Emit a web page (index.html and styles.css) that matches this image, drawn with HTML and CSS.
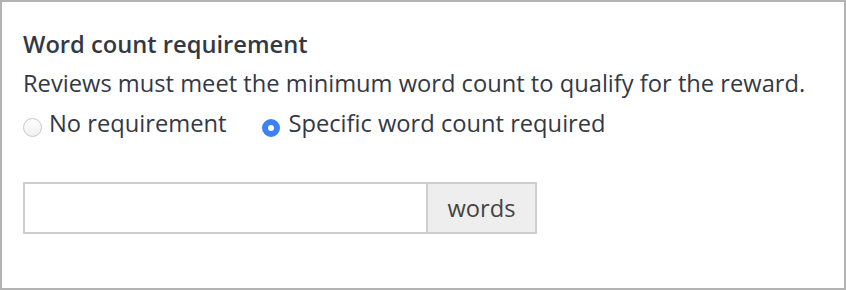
FILE: index.html
```html
<!DOCTYPE html>
<html lang="en">
<head>
<meta charset="utf-8">
<link rel="stylesheet" href="styles.css">
</head>
<body>
<div class="panel">
  <div class="title">Word count requirement</div>
  <div class="desc">Reviews must meet the minimum word count to qualify for the reward.</div>
  <div class="options">
    <label class="opt"><span class="radio"></span>No requirement</label>
    <label class="opt"><span class="radio checked"></span>Specific word count required</label>
  </div>
  <div class="group">
    <div class="field"></div>
    <div class="addon">words</div>
  </div>
</div>
</body>
</html>
```
FILE: styles.css
```css
html, body { margin: 0; padding: 0; background: #fff; }
body { font-family: "Open Sans", sans-serif; color: #333944; }
.panel {
  box-sizing: border-box;
  width: 846px;
  height: 290px;
  border: 2px solid #b3b3b3;
  padding: 23px 21px 0 21px;
}
.title { font-size: 23.7px; font-weight: 600; line-height: 39px; }
.desc { font-size: 23.7px; line-height: 39.5px; }
.options { display: flex; gap: 36px; font-size: 23.7px; line-height: 39.5px; }
.opt { display: flex; align-items: flex-start; gap: 7px; }
.radio {
  box-sizing: border-box;
  width: 19px; height: 19px; border-radius: 50%;
  border: 1px solid #c9c9c9;
  background: linear-gradient(#ffffff, #f0f0f0);
  margin-top: 14.5px;
}
.radio.checked {
  width: 18px; height: 18px;
  border: 6px solid #3b82f6;
  background: #fff;
  margin-top: 15.5px;
  margin-right: 1px;
}
.group { display: flex; margin-top: 39px; height: 52px; }
.field {
  box-sizing: border-box;
  width: 403px;
  border: 2px solid #cfcfcf;
  border-right: none;
}
.addon {
  box-sizing: border-box;
  width: 111px;
  border: 2px solid #cfcfcf;
  background: #eeeeee;
  display: flex; align-items: center; justify-content: center;
  font-size: 23.7px; color: #444;
}
```
